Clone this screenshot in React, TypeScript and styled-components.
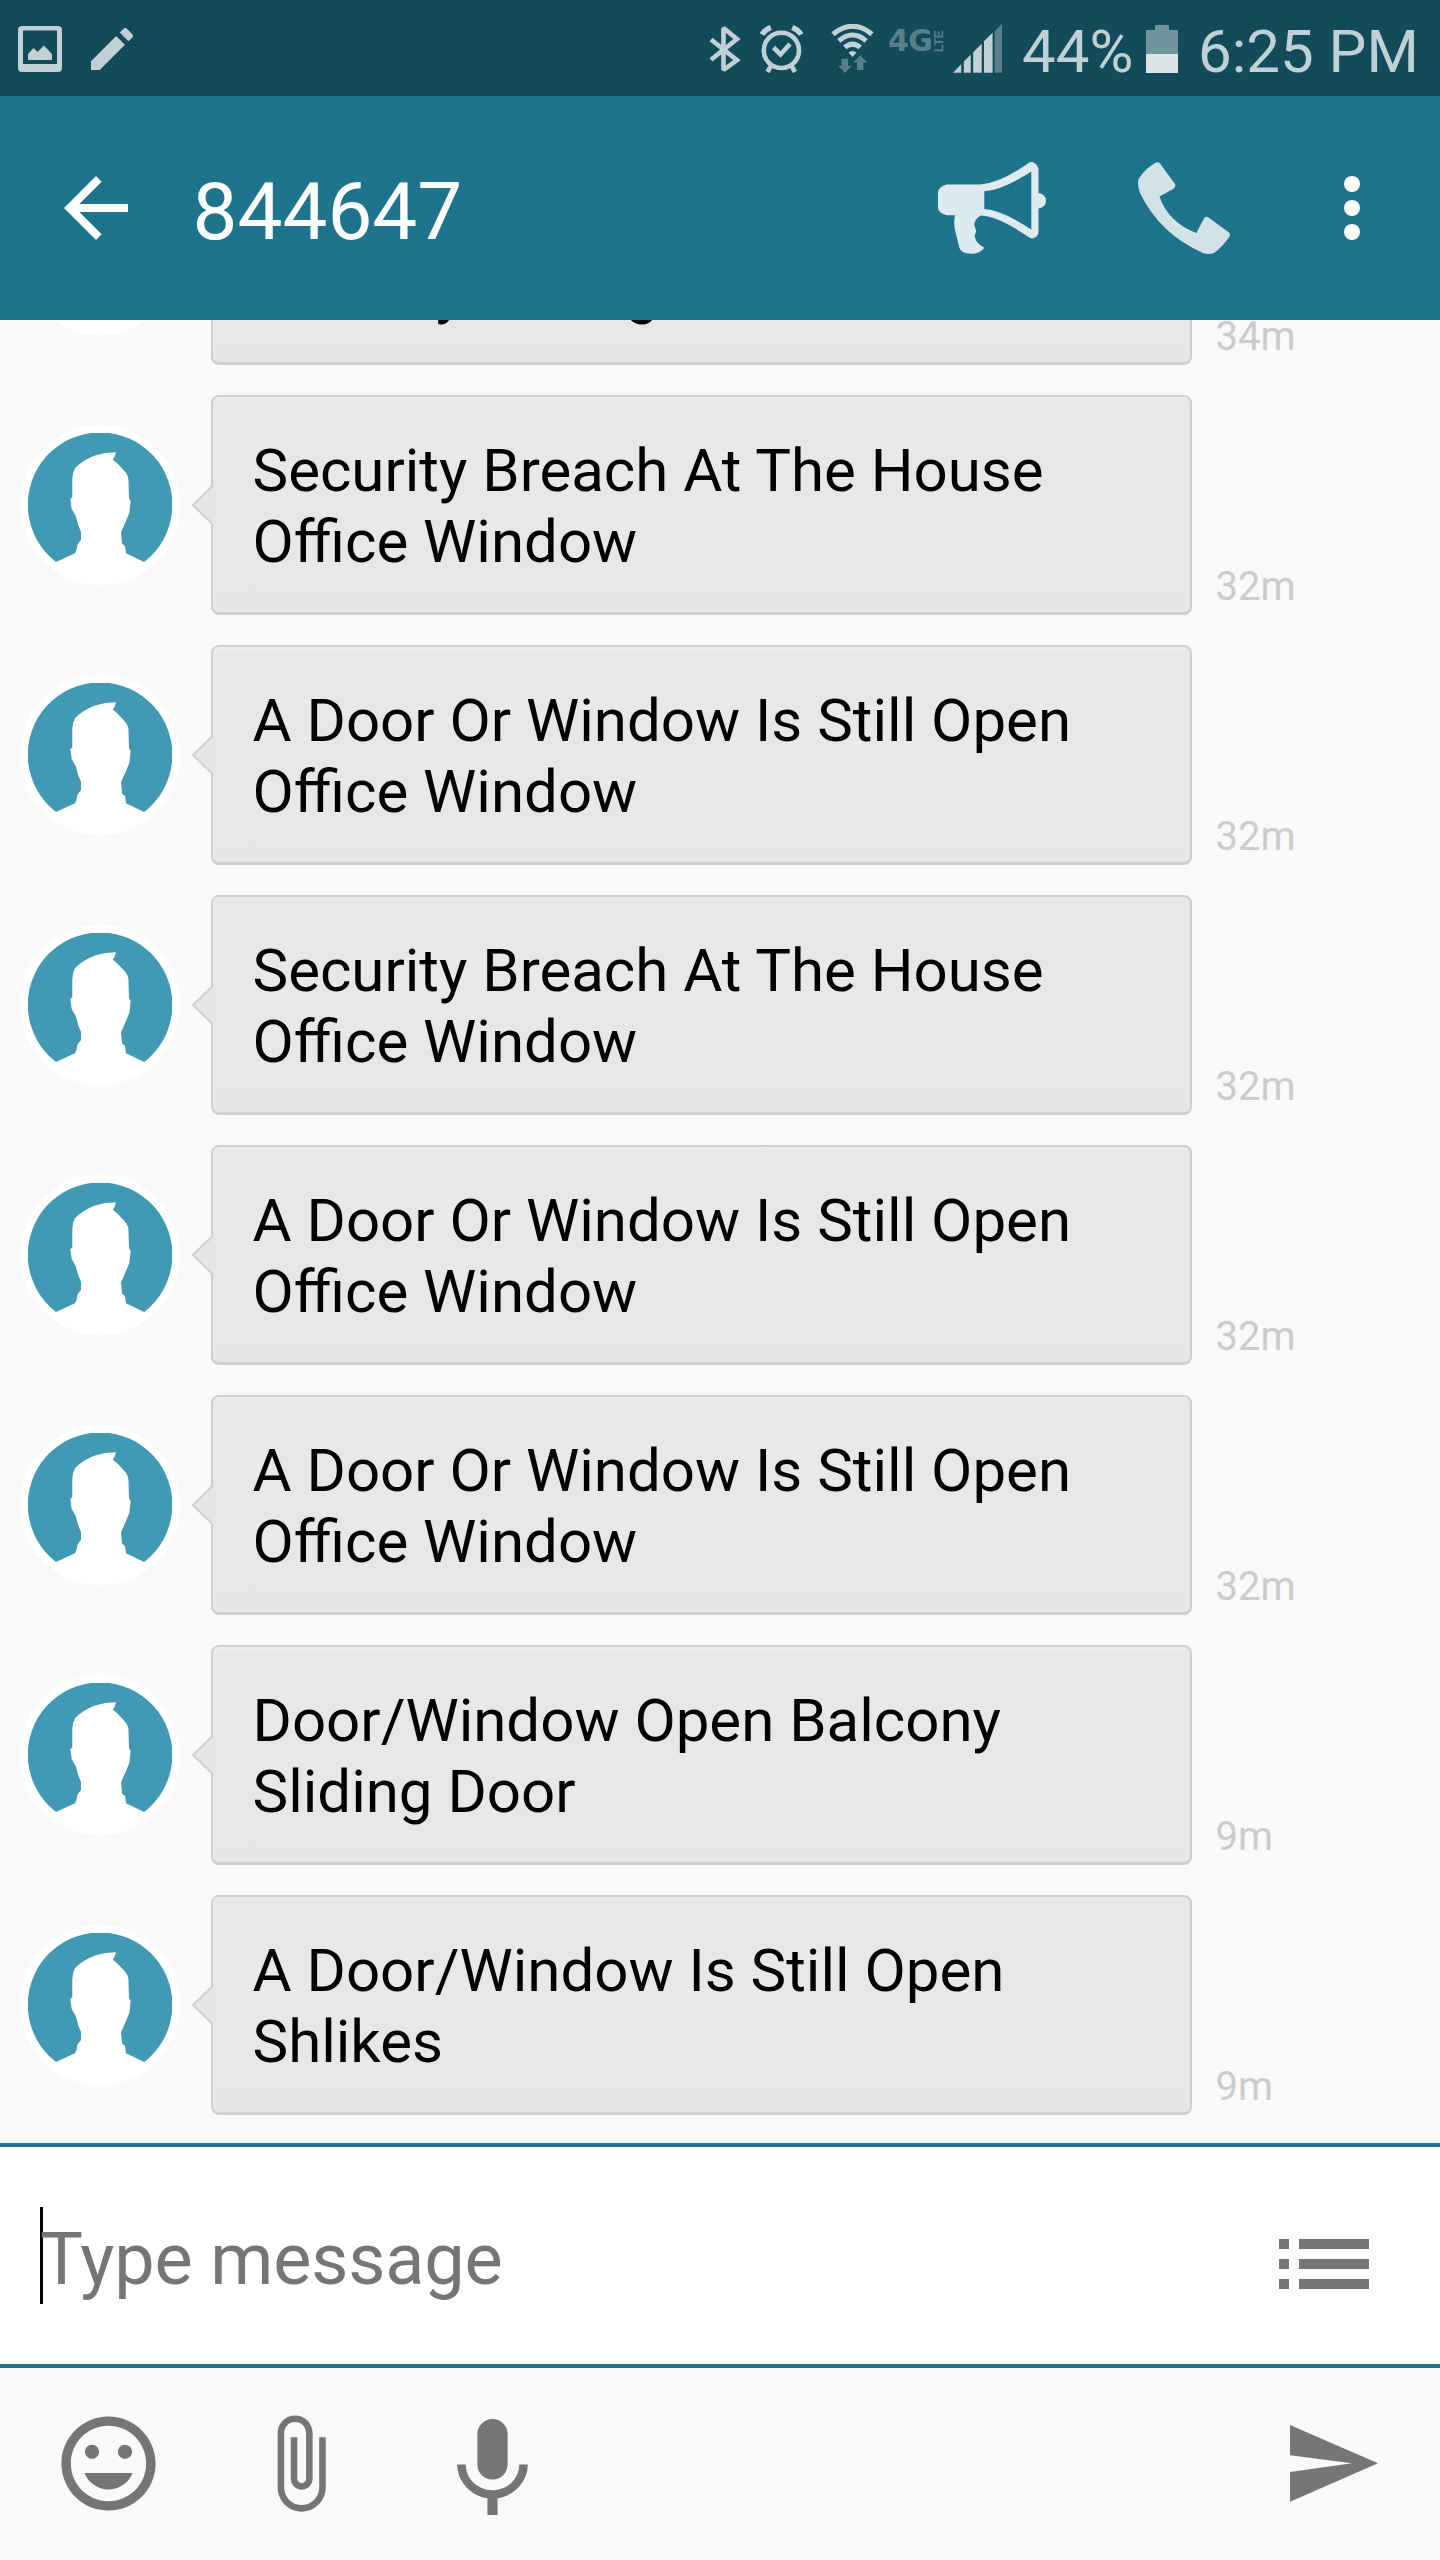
import React from "react";
import styled, { createGlobalStyle } from "styled-components";

const color = {
  status: "#124b59",
  statusInk: "#c1d0d5",
  statusDim: "#59808a",
  header: "#1e748c",
  page: "#f9f9f9",
  ink: "#757575",
  time: "#cccccc",
  avatar: "#4299b4",
};

const GlobalStyle = createGlobalStyle`
  * { box-sizing: border-box; }
  body { margin: 0; background: ${color.page}; font-family: Roboto, "Noto Sans", sans-serif; }
  svg { display: block; flex: none; }
`;

const Screen = styled.div`
  display: flex;
  flex-direction: column;
  width: 1440px;
  height: 2560px;
  overflow: hidden;
  background: ${color.page};
`;

const StatusBar = styled.header`
  display: flex;
  align-items: flex-start;
  justify-content: space-between;
  height: 96px;
  flex: none;
  padding: 16px 20px 0 18px;
  background: ${color.status};
  color: ${color.statusInk};
`;

const StatusGroup = styled.div`
  display: flex;
  align-items: flex-start;
`;

const Slot = styled.div<{ $left?: number; $top?: number }>`
  margin-left: ${(p) => p.$left ?? 0}px;
  margin-top: ${(p) => p.$top ?? 0}px;
`;

const StatusText = styled.span<{ $width: number; $left: number }>`
  width: ${(p) => p.$width}px;
  margin-left: ${(p) => p.$left}px;
  font-size: 60px;
  line-height: 71px;
  white-space: nowrap;
`;

const Network = styled.div`
  display: flex;
  justify-content: space-between;
  width: 56px;
  height: 24px;
  margin: 13px 0 0 13px;
  color: ${color.statusDim};
`;

const NetworkGeneration = styled.span`
  width: 45px;
  font: bold 30px/24px "DejaVu Sans", sans-serif;
  letter-spacing: -0.5px;
`;

const NetworkKind = styled.span`
  width: 10px;
  height: 23px;
  writing-mode: vertical-rl;
  transform: rotate(180deg);
  font: bold 12px/10px "Liberation Sans", sans-serif;
`;

const AppBar = styled.nav`
  display: flex;
  align-items: flex-start;
  height: 224px;
  flex: none;
  padding-left: 48px;
  background: ${color.header};
  color: #fff;
`;

const Title = styled.h1`
  width: 744.5px;
  margin: 69px 0 0 48.5px;
  font-size: 80px;
  font-weight: 400;
  line-height: 94px;
`;

const Thread = styled.main`
  display: flex;
  flex-direction: column;
  justify-content: flex-end;
  gap: 30px;
  height: 1823px;
  flex: none;
  padding: 0 0 28px 20px;
  overflow: hidden;
`;

const Row = styled.article`
  display: flex;
  align-items: center;
  height: 220px;
  flex: none;
`;

const Bubble = styled.div`
  position: relative;
  display: flex;
  flex-direction: column;
  justify-content: flex-end;
  width: 981px;
  height: 220px;
  margin-left: 31px;
  padding: 0 0 35px 39.5px;
  border: 2px solid #cfcfcf;
  border-bottom-width: 3px;
  border-radius: 8px;
  background: linear-gradient(#ececec 0, #e8e8e8 5px, #e7e7e7 100%);
`;

const Tail = styled.svg`
  position: absolute;
  left: -22px;
  top: 87px;
`;

const Message = styled.p`
  margin: 0;
  color: #000;
  font-size: 60px;
  line-height: 71px;
  white-space: pre;
`;

const Age = styled.time`
  align-self: flex-end;
  margin: 0 0 5px 23.5px;
  color: ${color.time};
  font-size: 40px;
  line-height: 47px;
`;

const Compose = styled.section`
  display: flex;
  align-items: flex-start;
  height: 225px;
  flex: none;
  padding-left: 40px;
  border-top: 4px solid ${color.header};
  border-bottom: 4px solid ${color.header};
  background: #fff;
`;

const Caret = styled.span`
  width: 3px;
  height: 97px;
  margin-top: 60px;
  background: #000;
`;

const Placeholder = styled.span`
  width: 1237px;
  margin: 70px 0 0 -3px;
  color: ${color.ink};
  font-size: 72px;
  line-height: 85px;
  letter-spacing: -0.15px;
`;

const Toolbar = styled.footer`
  display: flex;
  align-items: flex-start;
  height: 192px;
  padding-left: 51.5px;
  color: ${color.ink};
`;

const Glyph = ({ w, h = w, box, d }: { w: number; h?: number; box?: string; d: string }) => (
  <svg width={w} height={h} viewBox={box ?? "0 0 24 24"} fill="currentColor">
    <path fillRule="evenodd" d={d} />
  </svg>
);

const Bluetooth = () => (
  <svg width="32" height="48" viewBox="0 0 32 48" fill="none" stroke="currentColor" strokeWidth="4.6">
    <path d="M2 14.5 28 35.2 14.5 45V3L28 14 2 34.8" strokeMiterlimit="2" />
  </svg>
);

const Alarm = () => (
  <svg width="43" height="48" viewBox="0 0 43 48" fill="none" stroke="currentColor" strokeWidth="4.6">
    <circle cx="21.4" cy="25.4" r="17.6" />
    <path d="m13.5 22.5 7 7 9.5-10.5M11.5 40 7.5 47M31 40l4 7" />
    <path d="M2 9.500Q4.500 5 10.800 2.400M41 9.500Q38.500 5 32.200 2.400" strokeWidth="5.4" />
  </svg>
);

const Wifi = () => (
  <svg width="44" height="49" viewBox="0 0 44 49" fill="none" stroke="currentColor" strokeWidth="5">
    <path d="M2 10.300Q21.500-5.800 41 10.300M7.800 16.800Q21.500 5.200 35.200 16.800M13.800 23.400Q21.500 16.800 29.200 23.400" />
    <path d="M17.500 28.600Q21.500 25.400 25.500 28.600L21.500 33Z" fill="currentColor" stroke="none" />
    <path d="M10.500 34.800h6.500v7h4L14 49 7 41.800h3.500zM26 46h6.500v-7.500h4L29.200 31.300 22.200 38.500H26z" fill={color.statusDim} stroke="none" />
  </svg>
);

const Signal = () => (
  <svg width="50" height="49" viewBox="0 0 50 49" fill="currentColor">
    <path d="M0 48.700 8.200 40.300v8.400zM10.800 37.600l6.900-6.900v18h-6.900zM20.200 28.300l8.500-8.600v29h-8.500zM31 17.300l8.600-8.600v40H31z" />
    <path d="M41.700 7.200 49 0v48.700h-7.300z" fill={color.statusDim} />
  </svg>
);

const Battery = () => (
  <svg width="32" height="48" viewBox="0 0 32 48">
    <path d="M9 0h14v5h9v24H0V5h9z" fill="#71939b" />
    <path d="M0 29h32v19H0z" fill="#dbe4e7" />
  </svg>
);

const Megaphone = () => (
  <svg width="117" height="94" viewBox="0 -1 117 94" fill="#ddeaee">
    <path
      d="M17 22.500H50Q70 21.500 98.500 1Q101.500-1 105 1.500Q108.500 4 108.500 8V31Q116 32.500 116 38.700T108.500 46.500V69.500Q108.500 73.500 105 75.500Q101.500 77.500 98.500 75Q69 54.500 51 53.500Q44.500 56.500 44.300 63L46.300 69 44.700 73.500Q45 81 54.300 85.700Q50.500 91.700 41 91.700Q31 91.700 29.500 86L26 72Q23 63 25 53.300H17Q8 51.500 8 45V31Q8 24.500 17 22.500ZM54.300 29.300V47Q72 48 101.300 67.500V9.500Q72 28.500 54.300 29.300Z"
      fillRule="evenodd"
    />
  </svg>
);

const Phone = () => (
  <svg width="94" height="94" viewBox="-1 -1 94 94" fill="#d2e3e8">
    <path d="M17.500.8Q20-.8 22 1.600L37 22Q38 24.500 36 26.500L21.500 34.500Q30 60 58.300 71L66.300 56Q68 54 70.500 55.500L91 70.500Q92.500 72 91.500 74.500Q84 85.500 76 91Q71 93 65 91Q22 72 2 31Q-2 19 2 15Q7 7 17.500.8Z" />
  </svg>
);

const Overflow = () => (
  <svg width="16" height="64" viewBox="0 0 16 64" fill="currentColor">
    <circle cx="8" cy="8" r="8" />
    <circle cx="8" cy="32" r="8" />
    <circle cx="8" cy="56" r="8" />
  </svg>
);

const Avatar = () => (
  <svg width="160" height="160" viewBox="0 0 160 160">
    <circle cx="80" cy="80" r="80" fill="#fff" />
    <svg x="8" y="8" width="144" height="144" viewBox="8 8 144 144" overflow="hidden">
      <path
        fill={color.avatar}
        d="M36 137A72.300 72.300 0 1 1 124.200 137L106 128.300 105 121 102 118.500 101 107.300 106 96 109.300 88 110.700 76 109 73.300 108.500 57Q109 50 103 44.500Q98 38.500 92.700 34.500L94.500 32 96 27.300Q85 27.300 75 30.500Q62 35.500 55 43.300Q52.300 48 52.300 54V72.300L50.300 74.300 51.700 84 56 91.700Q57.500 100 61 106.700V115L57.500 119.500 56.500 125 55 128.300Z"
      />
    </svg>
  </svg>
);

const List = () => (
  <svg width="90" height="50" viewBox="0 0 90 50" fill={color.ink}>
    {[0, 20, 40].map((y) => (
      <path key={y} d={`M0 ${y}h10v10H0zM20 ${y}h70v10H20z`} />
    ))}
  </svg>
);

const MOOD =
  "M11.990 2C6.470 2 2 6.480 2 12s4.470 10 9.990 10C17.520 22 22 17.520 22 12S17.520 2 11.990 2zM12 20c-4.420 0-8-3.580-8-8s3.580-8 8-8 8 3.580 8 8-3.580 8-8 8zm3.500-9c.83 0 1.500-.67 1.500-1.500S16.330 8 15.500 8 14 8.670 14 9.500s.67 1.500 1.500 1.500zm-7 0c.83 0 1.500-.67 1.500-1.500S9.330 8 8.500 8 7 8.670 7 9.500 7.670 11 8.500 11zm3.500 6.500c2.330 0 4.310-1.460 5.110-3.500H6.890c.8 2.040 2.780 3.500 5.110 3.500z";
const CLIP =
  "M16.500 6v11.500c0 2.210-1.790 4-4 4s-4-1.790-4-4V5c0-1.380 1.120-2.500 2.500-2.500s2.500 1.120 2.500 2.500v10.500c0 .55-.45 1-1 1s-1-.45-1-1V6H10v9.500c0 1.380 1.120 2.500 2.500 2.500s2.500-1.120 2.500-2.500V5c0-2.210-1.790-4-4-4S7 2.790 7 5v12.500c0 3.040 2.460 5.500 5.500 5.500s5.500-2.460 5.500-5.500V6h-1.500z";
const MIC =
  "M12 14c1.660 0 2.990-1.340 2.990-3L15 5c0-1.660-1.340-3-3-3S9 3.340 9 5v6c0 1.660 1.340 3 3 3zm5.300-3c0 3-2.540 5.100-5.300 5.100S6.700 14 6.700 11H5c0 3.410 2.720 6.230 6 6.720V21h2v-3.280c3.280-.48 6-3.300 6-6.720h-1.700z";
const BACK = "M20 11H7.830l5.590-5.590L12 4l-8 8 8 8 1.410-1.410L7.830 13H20v-2z";
const PENCIL =
  "M3 17.250V21h3.750L17.550 10.200l-3.750-3.750L3 17.250zM20.710 7.040c.39-.39.39-1.020 0-1.410l-2.340-2.340c-.39-.39-1.020-.39-1.410 0l-1.650 1.650 3.750 3.750 1.650-1.650z";
const PHOTO =
  "M4 0H40Q44 0 44 4V42Q44 46 40 46H4Q0 46 0 42V4Q0 0 4 0ZM5 4.500V38H39V4.500ZM10 28 15.500 22 19.500 26 25.800 19.500 34 28V34H10Z";
const SEND = "M0 0 88 38.300 0 76.700V47L62 38.300 0 30.300Z";

const messages = [
  { text: "Balcony Sliding Door", age: "34m" },
  { text: "Security Breach At The House\nOffice Window", age: "32m" },
  { text: "A Door Or Window Is Still Open\nOffice Window", age: "32m" },
  { text: "Security Breach At The House\nOffice Window", age: "32m" },
  { text: "A Door Or Window Is Still Open\nOffice Window", age: "32m" },
  { text: "A Door Or Window Is Still Open\nOffice Window", age: "32m" },
  { text: "Door/Window Open Balcony\nSliding Door", age: "9m" },
  { text: "A Door/Window Is Still Open\nShlikes", age: "9m" },
];

export default function App() {
  return (
    <Screen>
      <GlobalStyle />
      <StatusBar>
        <StatusGroup>
          <Slot $top={10}><Glyph w={44} h={46} box="0 0 44 46" d={PHOTO} /></Slot>
          <Slot $left={22} $top={5}><Glyph w={56} d={PENCIL} /></Slot>
        </StatusGroup>
        <StatusGroup>
          <Slot $top={9}><Bluetooth /></Slot>
          <Slot $left={19} $top={9}><Alarm /></Slot>
          <Slot $left={28} $top={8}><Wifi /></Slot>
          <Network>
            <NetworkGeneration>4G</NetworkGeneration>
            <NetworkKind>LTE</NetworkKind>
          </Network>
          <Slot $left={9} $top={8}><Signal /></Slot>
          <StatusText $left={19} $width={110}>44%</StatusText>
          <Slot $left={14} $top={9}><Battery /></Slot>
          <StatusText $left={20} $width={222}>6:25 PM</StatusText>
        </StatusGroup>
      </StatusBar>
      <AppBar>
        <Slot $top={64}><Glyph w={96} d={BACK} /></Slot>
        <Title>844647</Title>
        <Slot $left={-7} $top={65}><Megaphone /></Slot>
        <Slot $left={90} $top={65}><Phone /></Slot>
        <Slot $left={113} $top={80}><Overflow /></Slot>
      </AppBar>
      <Thread>
        {messages.map((m, i) => (
          <Row key={i}>
            <Avatar />
            <Bubble>
              <Tail width="24" height="42" viewBox="0 0 24 42">
                <path d="M24 1 21.500 3 2 21 21.500 39.500 24 41Z" fill="#e7e7e7" />
                <path d="M21 2.500 2 21 21 39.500" fill="none" stroke="#d0d0d0" strokeWidth="2" />
              </Tail>
              <Message>{m.text}</Message>
            </Bubble>
            <Age>{m.age}</Age>
          </Row>
        ))}
      </Thread>
      <Compose>
        <Caret />
        <Placeholder>Type message</Placeholder>
        <Slot $left={2} $top={92}><List /></Slot>
      </Compose>
      <Toolbar>
        <Slot $top={39}><Glyph w={113} d={MOOD} /></Slot>
        <Slot $left={82.5} $top={43}><Glyph w={105} d={CLIP} /></Slot>
        <Slot $left={80} $top={41}><Glyph w={121} d={MIC} /></Slot>
        <Slot $left={737} $top={57}><Glyph w={88} h={77} box="0 0 88 77" d={SEND} /></Slot>
      </Toolbar>
    </Screen>
  );
}
